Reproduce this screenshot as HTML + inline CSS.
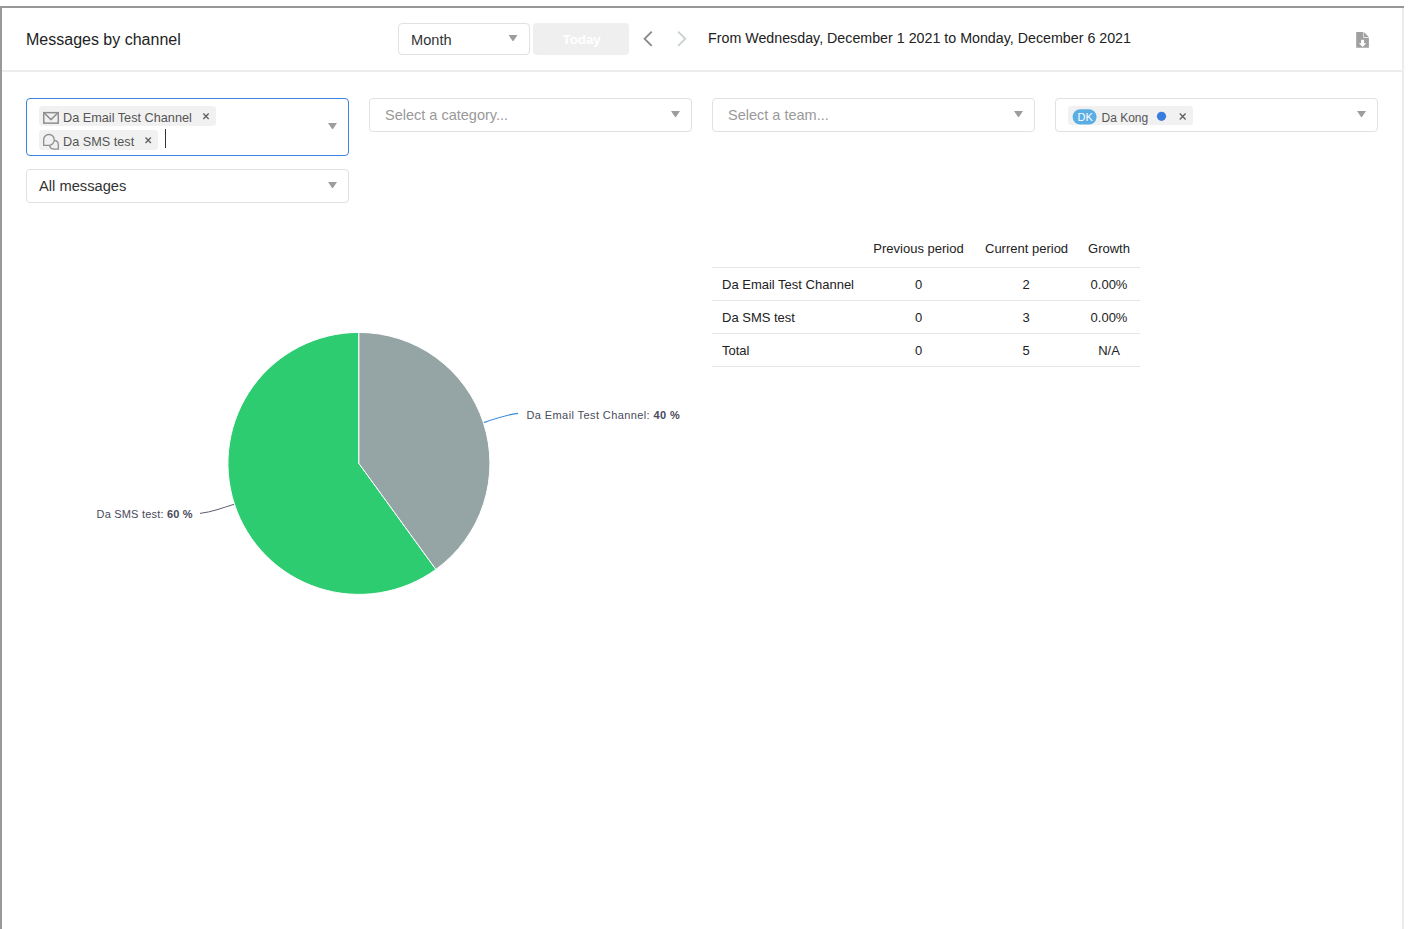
<!DOCTYPE html>
<html><head><meta charset="utf-8">
<style>
html,body{margin:0;padding:0;background:#fff;width:1425px;height:929px;overflow:hidden;}
body{font-family:"Liberation Sans",sans-serif;color:#333;position:relative;}
.a{position:absolute;}
.t{position:absolute;white-space:nowrap;line-height:1;}
.frame-top{left:0;top:6px;width:1404px;height:2px;background:#979797;}
.frame-left{left:0;top:6px;width:2px;height:923px;background:#999;}
.frame-right{left:1402px;top:8px;width:2px;height:921px;background:#ececec;}
.sep{left:2px;top:70px;width:1400px;height:2px;background:#ececec;}
.box{position:absolute;box-sizing:border-box;border:1px solid #e1e1e1;border-radius:4px;background:#fff;}
.arrow{position:absolute;width:9px;height:6px;background:#9d9d9d;clip-path:polygon(0 0,100% 0,55% 100%,45% 100%);}
.chip{position:absolute;box-sizing:border-box;background:#f1f1f1;border-radius:3px;}
.ph{color:#999;}
.c1{left:868px;width:101px;text-align:center;font-size:13px;color:#222;}
.c2{left:976px;width:100px;text-align:center;font-size:13px;color:#222;}
.c3{left:1059px;width:100px;text-align:center;font-size:13px;color:#222;}
.lbl{font-size:11px;color:#4a4a5c;letter-spacing:0.4px;}
.lbl b{font-weight:bold;}
</style></head><body>
<div class="a frame-top"></div>
<div class="a frame-left"></div>
<div class="a frame-right"></div>
<div class="a sep"></div>

<!-- header -->
<div class="t" style="left:26px;top:32px;font-size:16px;color:#222;">Messages by channel</div>

<div class="box" style="left:398px;top:23px;width:132px;height:32px;"></div>
<div class="t" style="left:411px;top:32.5px;font-size:14.6px;color:#333;">Month</div>
<div class="arrow" style="left:508.5px;top:35px;"></div>

<div class="a" style="left:533px;top:23px;width:96px;height:32px;background:#efefef;border-radius:4px;"></div>
<div class="t" style="left:562.5px;top:32.5px;font-size:13.3px;font-weight:bold;color:#fff;">Today</div>

<svg class="a" style="left:640px;top:28px" width="50" height="22" viewBox="0 0 50 22">
  <path d="M11.7 3.7 L4.6 10.8 L11.7 17.9" fill="none" stroke="#8a8a8a" stroke-width="1.9"/>
  <path d="M38.1 3.7 L45.2 10.8 L38.1 17.9" fill="none" stroke="#c8d2d0" stroke-width="1.9"/>
</svg>

<div class="t" style="left:708px;top:31px;font-size:14.25px;color:#222;">From Wednesday, December 1 2021 to Monday, December 6 2021</div>

<svg class="a" style="left:1350px;top:28px" width="24" height="24" viewBox="0 0 24 24">
  <path d="M6.2 4.1 H13.3 V9.8 H18.9 V19.8 H6.2 Z" fill="#a0a0a0"/>
  <path d="M13.9 4.1 L18.9 9.0 H13.9 Z" fill="#a0a0a0"/>
  <rect x="11.1" y="11.8" width="3" height="4" fill="#fff"/>
  <path d="M8.9 15.2 H16.3 L12.6 18.9 Z" fill="#fff"/>
</svg>

<!-- filters row -->
<div class="box" style="left:26px;top:98px;width:323px;height:58px;border-color:#3b83e0;"></div>
<div class="chip" style="left:39px;top:106px;width:177px;height:20px;"></div>
<div class="chip" style="left:39px;top:130px;width:119px;height:20px;"></div>
<div class="t" style="left:63px;top:112px;font-size:12.7px;color:#555;">Da Email Test Channel</div>
<div class="t" style="left:63px;top:136px;font-size:12.7px;color:#555;">Da SMS test</div>
<div class="a" style="left:165px;top:129px;width:1px;height:19px;background:#333;"></div>
<div class="arrow" style="left:328px;top:123px;"></div>

<div class="box" style="left:369px;top:98px;width:323px;height:34px;"></div>
<div class="t ph" style="left:385px;top:107.5px;font-size:14.5px;">Select a category...</div>
<div class="arrow" style="left:671px;top:111px;"></div>

<div class="box" style="left:712px;top:98px;width:323px;height:34px;"></div>
<div class="t ph" style="left:728px;top:107.5px;font-size:14.5px;">Select a team...</div>
<div class="arrow" style="left:1014px;top:111px;"></div>

<div class="box" style="left:1055px;top:98px;width:323px;height:34px;"></div>
<div class="chip" style="left:1068px;top:106px;width:125px;height:19px;"></div>
<div class="arrow" style="left:1357px;top:111px;"></div>

<div class="box" style="left:26px;top:169px;width:323px;height:34px;"></div>
<div class="t" style="left:39px;top:178.5px;font-size:14.7px;color:#333;">All messages</div>
<div class="arrow" style="left:328px;top:182px;"></div>



<!-- chip icons -->
<svg class="a" style="left:0;top:0" width="1425" height="160">
  <rect x="43.75" y="112.65" width="14.5" height="10.5" fill="none" stroke="#8e8e8e" stroke-width="1.5"/>
  <path d="M44.5 113.2 L51 119.6 L57.5 113.2" fill="none" stroke="#8e8e8e" stroke-width="1.5"/>
  <path d="M43.7 145.3 V139.6 A5.1 5.1 0 0 1 48.8 134.5 H49.1 A5.1 5.1 0 0 1 54.2 139.6 V140.2 A5.1 5.1 0 0 1 49.1 145.3 Z" fill="none" stroke="#8e8e8e" stroke-width="1.3"/>
  <path d="M54.6 140.4 A4.4 4.4 0 0 1 58.3 144.7 V149.1 H53.6 A4.4 4.4 0 0 1 49.6 145.9" fill="none" stroke="#8e8e8e" stroke-width="1.3"/>
  <path d="M203.3 113.6 L208.7 119 M208.7 113.6 L203.3 119" stroke="#606060" stroke-width="1.35"/>
  <path d="M145.5 137.6 L150.9 143 M150.9 137.6 L145.5 143" stroke="#606060" stroke-width="1.35"/>
  <path d="M1179.8 113.6 L1185.6 119.4 M1185.6 113.6 L1179.8 119.4" stroke="#606060" stroke-width="1.35"/>
  <rect x="1072.6" y="109.3" width="24" height="15.3" rx="7.65" fill="#5aaee3"/>
  <circle cx="1161.5" cy="116.3" r="4.6" fill="#3b7ddd"/>
</svg>
<div class="t" style="left:1077.5px;top:111.5px;font-size:11px;color:#fff;">DK</div>
<div class="t" style="left:1101.5px;top:111.5px;font-size:12px;color:#555;">Da Kong</div>

<!-- table -->
<div class="t" style="left:873px;top:242px;font-size:13px;color:#222;width:91px;text-align:center;">Previous period</div>
<div class="t" style="left:985px;top:242px;font-size:13px;color:#222;width:82px;text-align:center;">Current period</div>
<div class="t" style="left:1088px;top:242px;font-size:13px;color:#222;width:42px;text-align:center;">Growth</div>
<div class="a" style="left:712px;top:267px;width:428px;height:1px;background:#e6e6ea;"></div>
<div class="a" style="left:712px;top:300px;width:428px;height:1px;background:#e6e6ea;"></div>
<div class="a" style="left:712px;top:333px;width:428px;height:1px;background:#e6e6ea;"></div>
<div class="a" style="left:712px;top:366px;width:428px;height:1px;background:#e6e6ea;"></div>

<div class="t" style="left:722px;top:278px;font-size:13px;color:#222;">Da Email Test Channel</div>
<div class="t" style="left:722px;top:311px;font-size:13px;color:#222;">Da SMS test</div>
<div class="t" style="left:722px;top:344px;font-size:13px;color:#222;">Total</div>
<div class="t c1" style="top:278px;">0</div>
<div class="t c1" style="top:311px;">0</div>
<div class="t c1" style="top:344px;">0</div>
<div class="t c2" style="top:278px;">2</div>
<div class="t c2" style="top:311px;">3</div>
<div class="t c2" style="top:344px;">5</div>
<div class="t c3" style="top:278px;">0.00%</div>
<div class="t c3" style="top:311px;">0.00%</div>
<div class="t c3" style="top:344px;">N/A</div>

<!-- pie -->
<svg class="a" style="left:0;top:0" width="1425" height="929">
  <path d="M358.9 463.4 L358.9 332.4 A131 131 0 1 0 435.9 569.4 Z" fill="#2ecc71" stroke="#fff" stroke-width="1" stroke-linejoin="round"/>
  <path d="M358.9 463.4 L358.9 332.4 A131 131 0 0 1 435.9 569.4 Z" fill="#95a5a6" stroke="#fff" stroke-width="1" stroke-linejoin="round"/>
  <path d="M484 422.6 C495 418.5 505 415 518 413.4" fill="none" stroke="#3a8ae2" stroke-width="1.15"/>
  <path d="M200 513.4 C212 512 222 508 234 504.3" fill="none" stroke="#5e5e70" stroke-width="1"/>
</svg>
<div class="t lbl" style="left:526.5px;top:409.5px;">Da Email Test Channel: <b>40 %</b></div>
<div class="t lbl" style="left:96.5px;top:508.5px;letter-spacing:0.2px;">Da SMS test: <b>60 %</b></div>
</body></html>
